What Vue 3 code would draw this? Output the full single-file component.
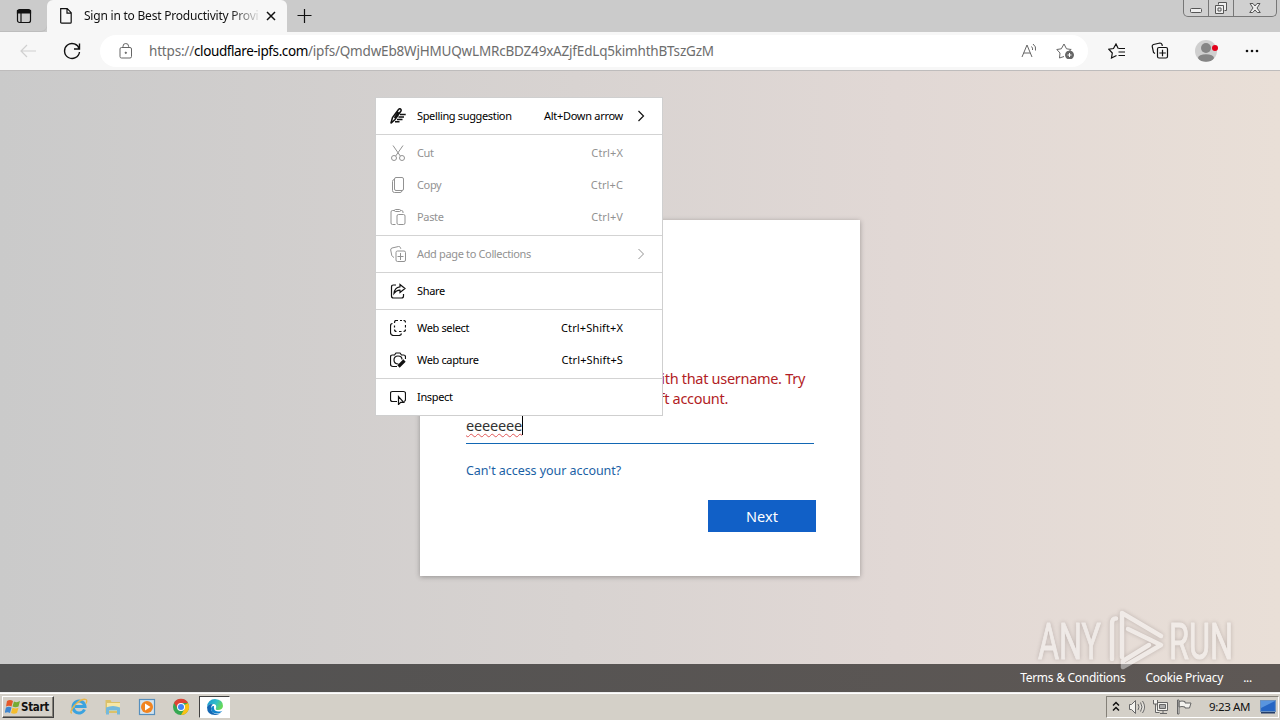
<script setup>
import { ref } from 'vue'

const url = {
    scheme: 'https://',
    host: 'cloudflare-ipfs.com',
    path: '/ipfs/QmdwEb8WjHMUQwLMRcBDZ49xAZjfEdLq5kimhthBTszGzM'
}
const username = ref('eeeeeee')

const sections = [
    [{ label: 'Spelling suggestion', keys: 'Alt+Down arrow', arrow: true, cls: 'spell', d: 'M.800 15.500L2.500 9.500L8.500 1.500q1.300-1.300 2.300-.3q.8 1-.2 2.300L5 11.500L1 15.300M10 6.500H15.700M8.500 9H14M7 11.500H12.500M5 13.800H9.500M8.500 4L4.500 10' }],
    [
        { label: 'Cut', keys: 'Ctrl+X', disabled: true, cls: 'cut', d: 'M3 .5L10.300 11M13 .5L5.700 11M6.500 13a2.500 2.500 0 1 1-5 0a2.500 2.500 0 0 1 5 0M14.500 13a2.500 2.500 0 1 1-5 0a2.500 2.500 0 0 1 5 0' },
        { label: 'Copy', keys: 'Ctrl+C', disabled: true, cls: 'copy', d: 'M6 .5h6q1.500 0 1.500 1.500v10q0 1.500-1.500 1.500h-6q-1.500 0-1.500-1.500v-10q0-1.500 1.500-1.500zM4 2.500q-1.500.3-1.500 2v9q0 2 2 2h5.500q1.500 0 2-1.500' },
        { label: 'Paste', keys: 'Ctrl+V', disabled: true, cls: 'paste', d: 'M4.500 1.500H2.500q-1.500 0-1.500 1.500v11q0 1.500 1.500 1.500h3M10.500 1.500h1q1.500 0 1.500 1.500v1M5.500.5h4q1 0 1 1t-1 1h-4q-1 0-1-1t1-1M8.500 5.500h5q1.500 0 1.500 1.500v7q0 1.500-1.500 1.500h-5q-1.500 0-1.500-1.500v-7q0-1.500 1.500-1.500' }
    ],
    [{ label: 'Add page to Collections', disabled: true, arrow: true, cls: 'collect', d: 'M4 11.500l-1.500-1q-.7-.5-.8-1.500L.700 4q-.2-1.500 1.300-2L8.500.500q1.500-.2 2 1.300l.3 1M7.500 5h6.500q1.500 0 1.500 1.500v7.500q0 1.500-1.500 1.500h-6.500q-1.500 0-1.500-1.500v-7.500q0-1.500 1.500-1.500M10.500 7v7M7.500 10.500h6' }],
    [{ label: 'Share', cls: 'share', d: 'M6 2H3.500Q1.500 2 1.500 4v9q0 2 2 2h8q2 0 2-2v-2M10 1.500L15 5.500L10 9.500V7.200Q6.500 7 4 10.500Q4.500 4.500 10 3.800z' }],
    [
        { label: 'Web select', keys: 'Ctrl+Shift+X', cls: 'webselect', d: 'M6 .5h2M10 .5h2M13.500.5q2 0 2 2M15.500 5v2.500M15.500 9.500q0 2-2 2M11.500 11.500H9M6.500 11.500q-2 0-2-2M4.500 7.500v-2M4.500 3q0-2.500 1.500-2.500M2.500 3.500Q.5 3.500.5 6v6.500q0 3 3 3H9q2 0 2.500-2' },
        { label: 'Web capture', keys: 'Ctrl+Shift+S', cls: 'capture', d: 'M7 14.500H3q-2.500 0-2.500-2.500V5q0-2 2-2h2L6 1h4l1.500 2h2q2 0 2 2v2M8.500 12q-4.500 0-4.500-4t4-4q4 0 4 3.500' }
    ],
    [{ label: 'Inspect', cls: 'inspect', d: 'M7 12.500H2.500Q.500 12.500.500 10.500V4.500Q.500 2.500 2.500 2.500H13.500q2 0 2 2v6q0 1.500-1.500 2M8.500 7.500v8l2.200-2.200h3z' }]
]
</script>

<template>
    <div class="screen">
        <header class="tabs">
            <div class="tab-actions">
                <svg viewBox="0 0 16 16" width="16" height="16">
                    <rect x="1.500" y="1.500" width="13" height="13" rx="2" />
                    <path d="M1.500 2.500h13v2.500h-13z" fill="#111" />
                    <path d="M5 5v9" />
                </svg>
            </div>
            <div class="tab">
                <svg viewBox="0 0 12 16" width="12" height="16" class="doc">
                    <path d="M.700.700h6.500l4 4v9.500q0 1-1 1H1.700q-1 0-1-1zM7 .700v4.500h4.300" />
                </svg>
                <span class="tab-title">Sign in to Best Productivity Provi</span>
                <svg viewBox="0 0 10 10" width="10" height="10" class="close">
                    <path d="M1 1l8 8M9 1L1 9" />
                </svg>
            </div>
            <svg viewBox="0 0 16 16" width="16" height="16" class="plus">
                <path d="M7.500 1v14M.5 7.500h14" />
            </svg>
            <div class="win-buttons">
                <span>
                    <svg viewBox="0 0 14 14" width="14" height="14"><rect x="1.500" y="7.500" width="11" height="4" rx="1" /></svg>
                </span>
                <span>
                    <svg viewBox="0 0 14 14" width="14" height="14">
                        <path d="M4.500 3.500v-2h8v8h-2M1.500 4.500h8v8h-8zM4 7h3v3H4z" />
                    </svg>
                </span>
                <span class="win-close">
                    <svg viewBox="0 0 14 14" width="14" height="14">
                        <path d="M2 2.500h3l2 2.500l2-2.500h3L9 7l3.300 4.500h-3L7 9l-2.300 2.500h-3L5 7z" />
                    </svg>
                </span>
            </div>
        </header>

        <nav class="toolbar">
            <svg viewBox="0 0 16 16" width="16" height="16" class="back">
                <path d="M16 8H1M7 2L1 8l6 6" />
            </svg>
            <svg viewBox="0 0 18 18" width="18" height="18" class="reload">
                <path d="M16.300 7A7.500 7.500 0 1 0 16.500 10M16.500 1.500V7H11" />
            </svg>
            <div class="address">
                <svg viewBox="0 0 14 16" width="14" height="16" class="lock">
                    <rect x="1" y="4.500" width="11.500" height="10.500" rx="1.500" />
                    <path d="M4 4.500V3.300a2.800 2.800 0 0 1 5.600 0V4.500" />
                    <circle cx="6.800" cy="9.800" r=".7" fill="#666" />
                </svg>
                <span class="url">{{ url.scheme }}<b>{{ url.host }}</b>{{ url.path }}</span>
                <svg viewBox="0 0 18 16" width="18" height="16" class="read">
                    <path d="M2 14L7 2l5 12M3.700 10h6.500M11.500 3.500q1.500 1.500 1 3.500M13 1q3.500 2.500 2.500 6.500" />
                </svg>
                <svg viewBox="0 0 18 16" width="18" height="16" class="fav">
                    <path d="M8 13.500L3.500 15l.5-5L.800 6.500l4.500-.700L8 1l2.500 4.800l4.700.700L13 8.500" />
                    <circle cx="13.500" cy="12" r="4" fill="#666" />
                    <path d="M13.500 10v4M11.500 12h4" stroke="#fff" />
                </svg>
            </div>
            <svg viewBox="0 0 18 16" width="18" height="16" class="favs">
                <path d="M8.500 12.500L3.500 15l.8-5L.800 6.200l4.700-.700L8 1l2.200 4.500M10.500 5.500H17M10.500 9H17M10.500 12.500H17" />
            </svg>
            <svg viewBox="0 0 18 18" width="18" height="18" class="coll">
                <path d="M4 11.500L2.500 10.500l-1.300-6q-.2-1.500 1.300-2L9 1q1.500 0 2 1.500l.3 1.500M8 5.500h7q1.500 0 1.500 1.500v7.500q0 1.500-1.500 1.500H8q-1.500 0-1.500-1.500V7q0-1.500 1.500-1.500M11.500 7.700v6.500M8.300 11h6.500" />
            </svg>
            <svg viewBox="0 0 24 24" width="24" height="24" class="avatar">
                <clipPath id="face"><circle cx="12" cy="12" r="11" /></clipPath>
                <circle cx="12" cy="12" r="11" fill="#cfcfcf" />
                <g clip-path="url(#face)" fill="#858585">
                    <circle cx="12" cy="9" r="5" />
                    <ellipse cx="12" cy="19" rx="8" ry="3.800" />
                </g>
                <circle cx="21" cy="9" r="3" fill="#e3001b" />
            </svg>
            <svg viewBox="0 0 14 4" width="14" height="4" class="more">
                <circle cx="2" cy="2" r="1.300" /><circle cx="7" cy="2" r="1.300" /><circle cx="12" cy="2" r="1.300" />
            </svg>
        </nav>

        <main class="page">
            <div class="card">
                <p class="error">We couldn't find an account with that username. Try<br>another, or get a new Microsoft account.</p>
                <div class="field"><span class="typed">{{ username }}</span></div>
                <a class="help">Can't access your account?</a>
                <button class="next">Next</button>
            </div>
        </main>

        <footer class="footer">
            <a class="terms">Terms &amp; Conditions</a>
            <a class="privacy">Cookie Privacy</a>
            <a class="dots">...</a>
        </footer>

        <div class="taskbar">
            <div class="start">
                <svg viewBox="0 0 16 16" width="16" height="16">
                    <path d="M2 2q3-2 6 0L6.500 7.500q-2.500-1.500-5.500 0z" fill="#e5592a" />
                    <path d="M9 2.500q3 1.500 6-.5l-1.500 5.500q-3 1.500-6 0z" fill="#76ab35" />
                    <path d="M1 8.500q3-1.500 5.500 0L5 14q-2.500-1.500-5.500 0z" fill="#3f86cf" />
                    <path d="M7.500 8.800q3 1.500 6 0L12 14q-3 1.500-6 0z" fill="#f5bd2d" />
                </svg>
                <span>Start</span>
            </div>
            <div class="launch">
                <svg viewBox="0 0 18 18" width="18" height="18">
                    <path d="M14.500 11.500A6 6 0 1 1 15 8.500H5" fill="none" stroke="#3ba3df" stroke-width="3" />
                    <path d="M2 15Q-1 15 4 8Q11 0 16 1.500q1.500 1 0 4" fill="none" stroke="#e8b64a" stroke-width="1.300" />
                </svg>
                <svg viewBox="0 0 18 18" width="18" height="18">
                    <path d="M1.500 2h5l1 2h8.500v11H1.500z" fill="#dcc168" />
                    <path d="M3 5h13v8H3z" fill="#f7e7a6" />
                    <path d="M2 9.500q7-3 14 0v7h-3v-4H5v4H2z" fill="#74b9dc" />
                </svg>
                <svg viewBox="0 0 18 18" width="18" height="18">
                    <rect x="1.500" y="1.500" width="15" height="15" fill="#d3e4f0" stroke="#568fbd" />
                    <circle cx="9" cy="9" r="6" fill="#f18420" />
                    <path d="M7 5.500v7l5.500-3.500z" fill="#fff" />
                </svg>
                <svg viewBox="0 0 18 18" width="18" height="18">
                    <circle cx="9" cy="9" r="8" fill="#36a852" />
                    <path d="M9 9l7-4A8 8 0 0 1 9 17l3.500-6z" fill="#fbc116" />
                    <path d="M2 5l4 6l3-6h7A8 8 0 0 0 2 5" fill="#df4335" />
                    <circle cx="9" cy="9" r="4" fill="#fff" />
                    <circle cx="9" cy="9" r="3" fill="#4285f4" />
                </svg>
            </div>
            <div class="running">
                <svg viewBox="0 0 18 18" width="18" height="18">
                    <defs>
                        <linearGradient id="wave" x1="0" y1="0" x2="1" y2=".4">
                            <stop offset="0" stop-color="#1695d3" />
                            <stop offset=".6" stop-color="#31bdc9" />
                            <stop offset="1" stop-color="#65d85a" />
                        </linearGradient>
                    </defs>
                    <path d="M1 9A8 8 0 0 1 9 1q8 .5 8 7q-.5 4-5 4q-3 0-2-2q1-4-3-4Q2 6 1 9" fill="url(#wave)" />
                    <path d="M1 9q2-4 6-2.500Q4.500 8 5 11q1 5 6 5q3 0 4.500-2Q13 17 9 17Q1 17 1 9" fill="#1467b3" />
                    <path d="M5 10q1-2.500 3-2q-1 5 4 5.500q2 .3 4.500-.8Q14 16 10 15.500Q5 15 5 10" fill="#1182cb" />
                </svg>
            </div>
            <div class="tray">
                <svg viewBox="0 0 8 12" width="8" height="12" class="chev">
                    <path d="M1 4.500l3-3l3 3M1 9.500l3-3l3 3" fill="none" stroke="#111" stroke-width="1.500" />
                </svg>
                <svg viewBox="0 0 18 16" width="18" height="16" class="sound">
                    <path d="M1.500 5.500h2l4-4v13l-4-4h-2zM10 5q2 3 0 6M12.500 3.500q3 4.500 0 9M14.500 2q4 6 0 12" />
                </svg>
                <svg viewBox="0 0 18 16" width="18" height="16" class="net">
                    <path d="M5.500 3.500h10v8h-10zM8 14.500h7M11 12v2M1.500 1v4h4V1M3.500 5v8.500h4" />
                    <path d="M7.500 5.500h6v4h-6z" fill="#aaa" />
                </svg>
                <svg viewBox="0 0 18 16" width="18" height="16" class="flag">
                    <path d="M1.500 1v14h1.500V1zM3 2.500q3-1 6 0v1.500h6L13.500 9H9V8Q6 7 3 8z" />
                </svg>
                <time>9:23 AM</time>
                <svg viewBox="0 0 16 14" width="16" height="14" class="desktop">
                    <path d="M.5.5h15v11H.5z" fill="#2666c4" stroke="#6c92bf" />
                    <path d="M1 1h14L1 8z" fill="#5995de" />
                    <path d="M1 12h14v1.500H1z" fill="#243d68" />
                </svg>
            </div>
        </div>

        <svg class="watermark" viewBox="0 0 204 64" width="204" height="64">
            <g class="mark-text">
                <text x="5" y="50" textLength="63" lengthAdjust="spacingAndGlyphs">ANY</text>
                <text x="136" y="50" textLength="64" lengthAdjust="spacingAndGlyphs">RUN</text>
            </g>
            <path d="M79 50V15q0-6 4-5.500M89 48V4L128 27M95 20L128 36L90 58v-6L116 36" />
        </svg>

        <div class="menu">
            <div v-for="(items, i) in sections" :key="i" class="section">
                <div v-for="item in items" :key="item.label" class="item" :class="{ disabled: item.disabled }">
                    <svg viewBox="0 0 16 16" width="16" height="16" :class="item.cls">
                        <path :d="item.d" />
                        <path v-if="item.cls === 'capture'" d="M14.500 8.500L8.500 14.500" class="nib" />
                    </svg>
                    <span class="label">{{ item.label }}</span>
                    <span class="keys" :class="{ tight: item.arrow }">{{ item.keys }}</span>
                    <svg v-if="item.arrow" viewBox="0 0 8 12" width="8" height="12" class="arrow">
                        <path d="M1.500 1L6.500 6L1.500 11" />
                    </svg>
                </div>
            </div>
        </div>
    </div>
</template>

<style>
body {
    margin: 0;
    overflow: hidden;
}
</style>

<style scoped>
.screen {
    position: relative;
    display: flex;
    flex-direction: column;
    width: 1280px;
    height: 720px;
    overflow: hidden;
    font-family: "Noto Sans", "Open Sans", sans-serif;
    color: #111;
    background: linear-gradient(90deg, #cacaca 0%, #d8d3d1 45%, #e1d8d5 70%, #e9dfd7 100%);
}

.screen * {
    box-sizing: border-box;
}

svg {
    display: block;
    flex: none;
    fill: none;
    stroke: #111;
    stroke-width: 1.2;
}

.tabs {
    display: flex;
    height: 32px;
    background: #cbcbcb;
}

.tab-actions {
    width: 47px;
    padding: 8px 0 0 16px;
    border-bottom-right-radius: 6px;
    box-shadow: inset 0 -1px #bdbdbd;
}

.tab {
    display: flex;
    align-items: center;
    width: 240px;
    padding: 0 11px 0 13px;
    background: #f7f7f7;
    border-radius: 6px 6px 0 0;
}

.tab-title {
    width: 178px;
    margin-left: 12px;
    white-space: nowrap;
    font-size: 12px;
    line-height: 18px;
    letter-spacing: -0.22px;
    mask-image: linear-gradient(90deg, #000 82%, transparent);
}

.close {
    margin-left: 4px;
    stroke-width: 1.5;
}

.plus {
    margin: 8px 0 0 10px;
}

.win-buttons {
    display: flex;
    width: 94px;
    height: 17px;
    margin-left: auto;
    margin-right: 3px;
    border: 1px solid #777;
    border-top: 0;
    border-radius: 0 0 5px 5px;
    background: #d0d0d0;
}

.win-buttons span {
    display: flex;
    align-items: center;
    justify-content: center;
    width: 25px;
    border-right: 1px solid #777;
}

.win-buttons .win-close {
    flex: 1;
    border: 0;
}

.win-buttons svg {
    stroke: #555;
    stroke-width: 1;
    fill: #eee;
}

.toolbar {
    display: flex;
    align-items: center;
    height: 39px;
    background: #f7f7f7;
    border-bottom: 1px solid #bebcbc;
}

.back {
    margin-left: 20px;
    stroke: #d0d0d0;
}

.reload {
    margin-left: 27px;
    stroke-width: 1.4;
}

.address {
    display: flex;
    align-items: center;
    width: 988px;
    height: 32px;
    margin-left: 19px;
    padding: 0 14px 0 19px;
    border-radius: 16px;
    background: #fff;
}

.address svg {
    stroke: #666;
    stroke-width: 1;
}

.url {
    margin-left: 16px;
    white-space: nowrap;
    font-size: 13.5px;
    letter-spacing: -0.19px;
    color: #6d6d6d;
}

.url b {
    font-weight: 400;
    letter-spacing: -0.4px;
    color: #000;
}

.read {
    margin-left: auto;
}

.fav {
    margin-left: 18px;
}

.favs {
    margin-left: 20px;
}

.coll {
    margin-left: 25px;
}

.avatar {
    margin-left: 25px;
    stroke: none;
}

.more {
    margin-left: 27px;
    fill: #111;
    stroke: none;
}

.page {
    height: 593px;
    padding-top: 149px;
}

.card {
    display: flex;
    flex-direction: column;
    width: 440px;
    height: 356px;
    margin: 0 auto;
    padding: 148px 44px 44px 46px;
    background: #fff;
    box-shadow: 0 1px 5px rgba(0, 0, 0, 0.3);
}

.error {
    margin: 0 0 1px;
    white-space: nowrap;
    font-size: 14.5px;
    line-height: 20px;
    letter-spacing: -0.3px;
    color: #b21d25;
}

.field {
    display: flex;
    height: 35px;
    padding-top: 6px;
    border-bottom: 1px solid #1267b4;
    margin-right: 2px;
}

.typed {
    height: 20px;
    border-right: 1px solid #000;
    font-size: 14.5px;
    line-height: 20px;
    letter-spacing: -0.17px;
    color: #333;
    text-decoration: underline wavy #e05656 1px;
    text-underline-offset: 2px;
}

.help {
    margin-top: 17px;
    align-self: flex-start;
    font-size: 12.5px;
    line-height: 20px;
    letter-spacing: -0.05px;
    color: #1b5fa5;
}

.next {
    align-self: flex-end;
    width: 108px;
    height: 32px;
    margin-top: 19px;
    border: 0;
    background: #1160c7;
    color: #fff;
    font: 14.5px "Noto Sans", sans-serif;
}

.footer {
    display: flex;
    justify-content: flex-end;
    height: 28px;
    padding-right: 28px;
    background: linear-gradient(90deg, #515151, #5e5855);
    font-size: 12px;
    line-height: 28px;
    letter-spacing: -0.27px;
    color: #fff;
}

.footer a {
    margin-left: 20px;
}

.taskbar {
    display: flex;
    align-items: center;
    height: 28px;
    border-top: 1px solid #eee;
    background: #d4d0c8;
    box-shadow: inset 0 1px #fff;
}

.taskbar svg {
    stroke: none;
}

.start {
    display: flex;
    align-items: center;
    width: 52px;
    height: 22px;
    margin: 1px 0 0 2px;
    padding-left: 2px;
    border: 1px solid;
    border-color: #fff #404040 #404040 #fff;
    box-shadow: inset -1px -1px #848078;
    font: bold 11.5px "DejaVu Sans Condensed", "DejaVu Sans", sans-serif;
    letter-spacing: -0.3px;
}

.launch {
    display: flex;
    gap: 16px;
    margin: 1px 0 0 16px;
}

.running {
    display: flex;
    justify-content: center;
    align-items: center;
    width: 31px;
    height: 22px;
    margin: 1px 0 0 9px;
    background: #fff;
    border: 1px solid;
    border-color: #404040 #fff #fff #404040;
}

.tray {
    display: flex;
    align-items: center;
    width: 173px;
    height: 22px;
    margin: 1px 1px 0 auto;
    padding-left: 5px;
    border: 1px solid;
    border-color: #848078 #fff #fff #848078;
    font-size: 12px;
}

.tray .sound,
.tray .net,
.tray .flag {
    stroke: #666;
    stroke-width: 1;
    fill: #f3f2ee;
}

.sound {
    margin-left: 8px;
}

.net,
.flag {
    margin-left: 6px;
}

.tray time {
    width: 42px;
    margin-left: 15px;
    padding-bottom: 1px;
    white-space: nowrap;
    font-size: 11.5px;
    letter-spacing: -0.35px;
}

.desktop {
    margin-left: 9px;
}

/* translucent logo floats over the page and the footer */
.watermark {
    position: absolute;
    left: 1033px;
    top: 609px;
    overflow: visible;
    opacity: 0.42;
    stroke: #fff;
    stroke-width: 4.5;
    stroke-linecap: round;
    stroke-linejoin: round;
    filter: drop-shadow(0 0 2px rgba(90, 75, 75, 0.7));
}

.mark-text {
    fill: #fff;
    stroke: #fff;
    stroke-width: 1;
    font: 50px Roboto, "Liberation Sans", sans-serif;
}

.menu {
    position: absolute;
    left: 375px;
    top: 97px;
    width: 288px;
    border: 1px solid #cfcfcf;
    background: #fff;
    font-size: 11px;
    line-height: 16px;
}

.section {
    padding: 2px 0;
}

.section + .section {
    border-top: 1px solid #d3d3d3;
}

.item {
    display: flex;
    align-items: center;
    height: 32px;
    padding: 0 39px 0 14px;
    color: #000;
}

.item.disabled {
    color: #929292;
}

.disabled svg {
    stroke: #929292;
    stroke-width: 1;
}

.label,
.keys {
    padding-bottom: 1px;
}

.label {
    margin-left: 11px;
    letter-spacing: -0.35px;
}

.keys {
    margin-left: auto;
    letter-spacing: 0.1px;
}

.keys.tight {
    letter-spacing: -0.28px;
}

.arrow {
    margin-left: 14px;
    margin-right: -22px;
}

.spell {
    stroke-width: 1.5;
}

.nib {
    stroke-width: 3.2;
}
</style>
